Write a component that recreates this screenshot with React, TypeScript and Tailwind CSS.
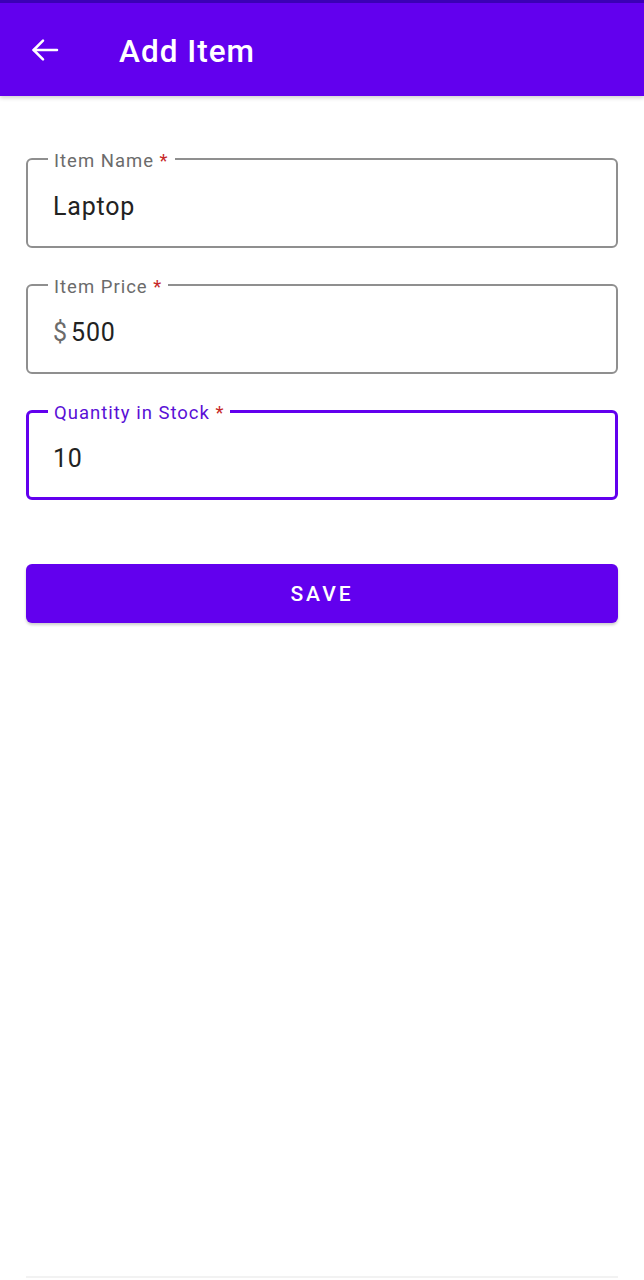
import { useState } from 'react';

const font = { fontFamily: 'Roboto, "Liberation Sans", sans-serif' };

function Field({
  label,
  value,
  prefix,
  focused,
}: {
  label: string;
  value: string;
  prefix?: string;
  focused?: boolean;
}) {
  return (
    <div
      className={`relative h-[90px] rounded-[6px] flex items-center pt-[7px] ${
        focused ? 'border-[3px] border-[#6200ee] px-[24px]' : 'border-2 border-[#8f8f8f] px-[25px]'
      }`}
    >
      <span
        className={`absolute bg-white px-[6px] text-[18.5px] tracking-[1px] leading-[24px] ${
          focused ? 'text-[#5a10d6] -top-[12px] left-[19px]' : 'text-[#6b6b6b] -top-[11px] left-[20px]'
        }`}
      >
        {label} <span className="text-[#c62828]">*</span>
      </span>
      {prefix && <span className="text-[25px] text-[#6b6b6b] mr-[4px]">{prefix}</span>}
      <span className="text-[25px] text-[#222] tracking-[0.8px]">{value}</span>
    </div>
  );
}

export default function App() {
  const [saved, setSaved] = useState(false);

  return (
    <div className="w-[644px] h-[1280px] bg-white flex flex-col relative" style={font}>
      {/* app bar */}
      <div className="h-[96px] bg-[#6200ee] border-t-[3px] border-[#3b00b5] flex items-center shadow-[0_2px_4px_rgba(0,0,0,0.18)] z-10">
        <button className="ml-[29px] w-[32px] h-[32px] flex items-center justify-center">
          <svg width="32" height="32" viewBox="0 0 24 24" fill="none" stroke="white" strokeWidth="1.9" strokeLinecap="round" strokeLinejoin="round">
            <path d="M21 12H3.5" />
            <path d="M10.5 5 3.5 12l7 7" />
          </svg>
        </button>
        <h1 className="ml-[58px] mt-[5px] text-white text-[31.5px] font-medium tracking-[1px]">Add Item</h1>
      </div>

      <div className="px-[26px] pt-[62px] flex flex-col gap-[36px]">
        <Field label="Item Name" value="Laptop" />
        <Field label="Item Price" value="500" prefix="$" />
        <Field label="Quantity in Stock" value="10" focused />
      </div>

      <div className="px-[26px] mt-[64px]">
        <button
          onClick={() => setSaved(!saved)}
          className="w-full h-[59px] rounded-[6px] bg-[#6200ee] text-white text-[21px] font-medium tracking-[3px] pt-[2px] shadow-[0_2px_3px_rgba(0,0,0,0.2)]"
        >
          SAVE
        </button>
      </div>

      <div className="mt-auto mx-[26px] mb-[2px] h-[2px] bg-[#f2f2f2]" />
    </div>
  );
}
